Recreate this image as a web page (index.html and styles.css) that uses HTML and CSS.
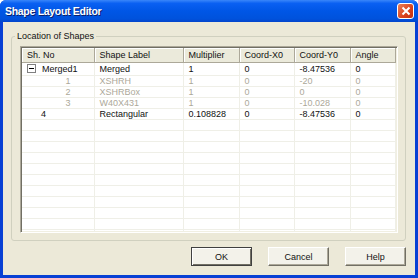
FILE: index.html
```html
<!DOCTYPE html>
<html>
<head>
  <title>Shape Layout Editor</title>
  <link rel="stylesheet" href="styles.css">
</head>
<body>
  <div class="window">
    <div class="titlebar">
      <span class="title">Shape Layout Editor</span>
      <span class="close-btn">
        <svg width="10" height="10" viewBox="0 0 10 10"><path d="M1.5 1.5 L8.5 8.5 M8.5 1.5 L1.5 8.5" stroke="#fff" stroke-width="2"/></svg>
      </span>
    </div>
    <div class="client">
      <fieldset class="group">
        <legend>Location of Shapes</legend>
        <div class="list">
          <table class="grid">
            <colgroup>
              <col class="c1"><col class="c2"><col class="c3"><col class="c4"><col class="c5"><col>
            </colgroup>
            <thead>
              <tr><th>Sh. No</th><th>Shape Label</th><th>Multiplier</th><th>Coord-X0</th><th>Coord-Y0</th><th>Angle</th></tr>
            </thead>
            <tbody>
              <tr class="parent"><td><span class="expander"></span>Merged1</td><td>Merged</td><td>1</td><td>0</td><td>-8.47536</td><td>0</td></tr>
              <tr class="child"><td class="num">1</td><td>XSHRH</td><td>1</td><td>0</td><td>-20</td><td>0</td></tr>
              <tr class="child"><td class="num">2</td><td>XSHRBox</td><td>1</td><td>0</td><td>0</td><td>0</td></tr>
              <tr class="child"><td class="num">3</td><td>W40X431</td><td>1</td><td>0</td><td>-10.028</td><td>0</td></tr>
              <tr><td class="top">4</td><td>Rectangular</td><td>0.108828</td><td>0</td><td>-8.47536</td><td>0</td></tr>
              <tr><td></td><td></td><td></td><td></td><td></td><td></td></tr>
              <tr><td></td><td></td><td></td><td></td><td></td><td></td></tr>
              <tr><td></td><td></td><td></td><td></td><td></td><td></td></tr>
              <tr><td></td><td></td><td></td><td></td><td></td><td></td></tr>
              <tr><td></td><td></td><td></td><td></td><td></td><td></td></tr>
              <tr><td></td><td></td><td></td><td></td><td></td><td></td></tr>
              <tr><td></td><td></td><td></td><td></td><td></td><td></td></tr>
              <tr><td></td><td></td><td></td><td></td><td></td><td></td></tr>
              <tr><td></td><td></td><td></td><td></td><td></td><td></td></tr>
              <tr><td></td><td></td><td></td><td></td><td></td><td></td></tr>
              <tr><td></td><td></td><td></td><td></td><td></td><td></td></tr>
            </tbody>
          </table>
        </div>
      </fieldset>
      <div class="buttons">
        <button class="btn default">OK</button>
        <button class="btn">Cancel</button>
        <button class="btn">Help</button>
      </div>
    </div>
  </div>
</body>
</html>
```
FILE: styles.css
```css
body {
  margin: 0;
  font-family: "Liberation Sans", Arial, sans-serif;
  font-size: 9px;
  color: #111;
  background: #fff;
}

.window {
  width: 418px;
  height: 278px;
  box-sizing: border-box;
  display: flex;
  flex-direction: column;
  background: #0840d4;
  border-radius: 6px 6px 0 0;
  overflow: hidden;
}

.titlebar {
  height: 22px;
  flex: none;
  display: flex;
  align-items: center;
  justify-content: space-between;
  padding: 0 4px 0 5px;
  background: linear-gradient(#3a86fa 0%, #0a60f2 15%, #0056e6 50%, #0052dc 85%, #0445cc 100%);
}

.title {
  color: #fff;
  font-family: "Liberation Sans", Arial, sans-serif;
  font-weight: bold;
  font-size: 10.5px;
  letter-spacing: -0.3px;
  text-shadow: 1px 1px #0a1e6a;
}

.close-btn {
  width: 17px;
  height: 16px;
  box-sizing: border-box;
  border: 1px solid #fff;
  border-radius: 3px;
  background: linear-gradient(135deg, #e8805a, #d9411c 60%, #c2300e);
  display: flex;
  align-items: center;
  justify-content: center;
}

.client {
  flex: 1;
  margin: 0 3px 3px 3px;
  background: #ece9d8;
  display: flex;
  flex-direction: column;
  padding: 9px 9px 0 8px;
}

.group {
  margin: 0;
  padding: 5px 7px 6px 8px;
  border: 1px solid #d0d0bf;
  border-radius: 3px;
  height: 210px;
  box-sizing: border-box;
}

.group legend {
  padding: 0 2px;
  margin-left: -5px;
}

.list {
  height: 187px;
  box-sizing: border-box;
  background: #fff;
  border-top: 1px solid #aca899;
  border-left: 1px solid #aca899;
  border-right: 1px solid #fff;
  border-bottom: 1px solid #fff;
  box-shadow: inset 1px 1px #716f64, inset -1px -1px #f1efe2;
  padding: 1px;
  overflow: hidden;
}

.grid {
  border-collapse: collapse;
  width: 100%;
  table-layout: fixed;
}

.c1 { width: 72px; }
.c2 { width: 89px; }
.c3 { width: 56px; }
.c4 { width: 55px; }
.c5 { width: 56px; }

.grid th {
  height: 14px;
  padding: 0 0 0 5px;
  text-align: left;
  font-weight: normal;
  background: #ebeadb;
  border-right: 1px solid #aca899;
  border-bottom: 1px solid #aca899;
  box-shadow: inset 1px 1px #fff;
  white-space: nowrap;
}

.grid td {
  height: 10px;
  padding: 0 0 0 5px;
  border-right: 1px solid #efefe7;
  border-bottom: 1px solid #efefe7;
  white-space: nowrap;
  line-height: 10px;
}

.grid tr.parent td {
  height: 12px;
}

.grid tr.child td {
  color: #aca899;
}

.grid td.num {
  text-align: right;
  padding-right: 23px;
}

.grid td.top {
  padding-left: 19px;
}

.expander {
  display: inline-block;
  width: 7px;
  height: 7px;
  border: 1px solid #808080;
  position: relative;
  vertical-align: -1px;
  margin-right: 6px;
}

.expander::after {
  content: "";
  position: absolute;
  left: 1px;
  top: 3px;
  width: 5px;
  height: 1px;
  background: #000;
}

.buttons {
  display: flex;
  justify-content: flex-end;
  gap: 16px;
  margin-top: 6px;
}

.btn {
  width: 61px;
  height: 19px;
  font-family: "Liberation Sans", Arial, sans-serif;
  font-size: 9px;
  color: #111;
  background: #f3f2ea;
  border: 1px solid;
  border-color: #fff #716f64 #716f64 #fff;
  box-shadow: inset -1px -1px #aca899;
  padding: 0;
}

.btn.default {
  border-color: #404040;
  box-shadow: inset 1px 1px #fff, inset -1px -1px #716f64;
}
```
